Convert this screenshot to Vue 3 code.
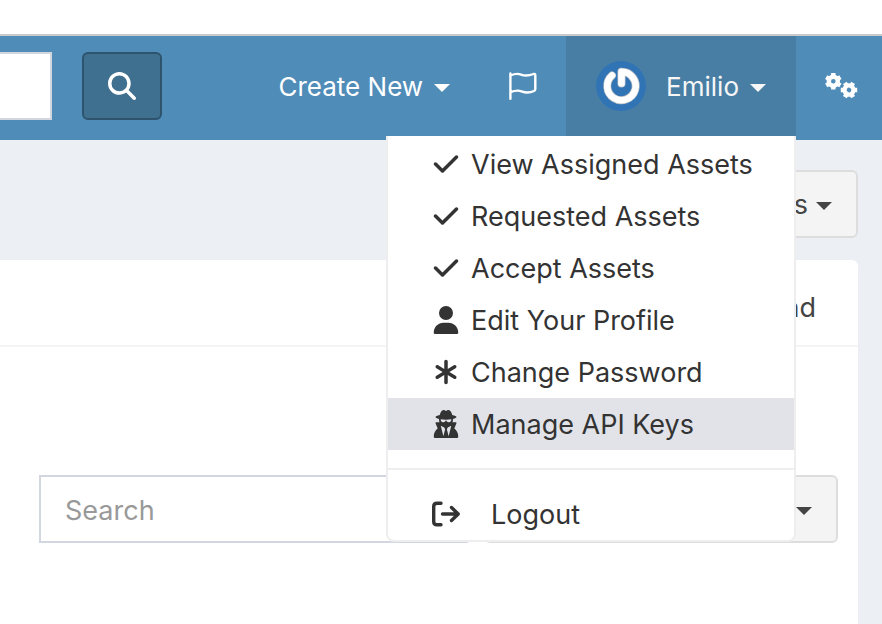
<script setup>
const checkPath =
  'M438.6 105.4c12.5 12.5 12.5 32.8 0 45.3l-256 256c-12.5 12.5-32.8 12.5-45.3 0l-128-128c-12.5-12.5-12.5-32.8 0-45.3s32.8-12.5 45.3 0L160 338.7 393.4 105.4c12.5-12.5 32.8-12.5 45.3 0z'
const userPath =
  'M224 256a128 128 0 1 0 0-256 128 128 0 1 0 0 256zm-45.7 48C79.8 304 0 383.8 0 482.3C0 498.7 13.3 512 29.7 512H418.3c16.4 0 29.7-13.3 29.7-29.7C448 383.8 368.2 304 269.7 304H178.3z'
const asteriskPath =
  'M224 32c17.700 0 32 14.300 32 32v135.500l111.500-66.900c15.200-9.100 34.800-4.200 43.900 11s4.200 34.800-11 43.900L286.200 256l114.300 68.600c15.200 9.100 20.100 28.700 11 43.900s-28.700 20.100-43.900 11L256 312.500V448c0 17.700-14.300 32-32 32s-32-14.300-32-32V312.500L80.500 379.400c-15.200 9.100-34.800 4.200-43.900-11s-4.200-34.800 11-43.900L161.800 256 47.500 187.400c-15.200-9.100-20.100-28.700-11-43.900s28.700-20.100 43.900-11L192 199.500V64c0-17.700 14.300-32 32-32z'
const secretPath =
  'M224 16c-6.7 0-10.8-2.8-15.5-6.1C201.900 5.400 194 0 176 0c-30.500 0-52 43.700-66 89.400C62.700 98.100 32 112.200 32 128c0 14.300 25 27.100 64.600 35.900c-.4 4-.6 8-.6 12.100c0 17 3.300 33.200 9.300 48H45.400C38 224 32 230 32 237.400c0 1.700 .3 3.400 1 5l38.800 96.900C28.200 371.800 0 423.800 0 482.300C0 498.700 13.300 512 29.700 512H418.300c16.400 0 29.700-13.300 29.700-29.700c0-58.500-28.200-110.400-71.700-143L415 242.400c.6-1.600 1-3.300 1-5c0-7.400-6-13.400-13.400-13.400H342.700c6-14.800 9.300-31 9.300-48c0-4.100-.2-8.100-.6-12.100C391 155.100 416 142.300 416 128c0-15.800-30.700-29.900-78-38.600C324 43.700 302.500 0 272 0c-18 0-25.900 5.400-32.500 9.900c-4.800 3.300-8.800 6.100-15.500 6.100zm56 208H267.600c-16.500 0-31.100-10.600-36.300-26.200c-2.300-7-12.200-7-14.500 0c-5.200 15.600-19.900 26.200-36.300 26.200H168c-22.100 0-40-17.900-40-40V169.600c28.200 4.100 61 6.400 96 6.400s67.800-2.300 96-6.400V184c0 22.100-17.900 40-40 40zm-88 96l16 32L176 480 128 288l64 32zm128-32L272 480 240 352l16-32 64-32z'

const items = [
  { label: 'View Assigned Assets', icon: checkPath },
  { label: 'Requested Assets', icon: checkPath },
  { label: 'Accept Assets', icon: checkPath },
  { label: 'Edit Your Profile', icon: userPath },
  { label: 'Change Password', icon: asteriskPath },
  { label: 'Manage API Keys', icon: secretPath, active: true },
]
const teeth = [0, 60, 120]
</script>

<template>
  <div class="page">
    <header class="navbar">
      <form class="lookup" @submit.prevent>
        <input class="lookup-input" type="text" aria-label="Lookup by asset tag" />
        <button class="lookup-button" type="submit" aria-label="Find asset">
          <svg class="icon" viewBox="0 0 512 512" aria-hidden="true">
            <path
              d="M416 208c0 45.900-14.900 88.300-40 122.700L502.600 457.400c12.500 12.500 12.500 32.800 0 45.300s-32.800 12.500-45.300 0L330.700 376c-34.400 25.200-76.800 40-122.700 40C93.100 416 0 322.900 0 208S93.100 0 208 0S416 93.100 416 208zM208 352a144 144 0 1 0 0-288 144 144 0 1 0 0 288z"
            />
          </svg>
        </button>
      </form>
      <nav class="nav">
        <a class="nav-link" href="#"><span class="label">Create New</span><span class="caret"></span></a>
        <a class="nav-link" href="#" aria-label="Alerts">
          <svg class="flag" viewBox="1 0 26 28" aria-hidden="true">
            <path d="M1.400 1.500v25.300M1.400 3.500C5 2 8.500 1.200 12 2.600C16 4.200 20 3.800 24.500 2Q26.300 1.500 26.300 3.300V17Q26.300 18.500 25 19C20.500 21 16.500 20.800 12.500 19.300C8.500 17.900 5 18.800 1.400 20.200" />
          </svg>
        </a>
        <div class="user">
          <a class="nav-link user-link" href="#" aria-expanded="true">
            <svg class="avatar" viewBox="0 0 50 50" aria-hidden="true">
              <circle cx="25" cy="25" r="25" fill="#3174b5" />
              <g fill="none" stroke-linecap="round" stroke-linejoin="round">
                <path class="logo-shade" d="M16 14.400A14.200 14.200 0 1 0 25.500 10.800V22.500" />
                <path class="logo-line" d="M16 14.400A14.200 14.200 0 1 0 25.500 10.800V22.500" />
              </g>
            </svg>
            <span class="label">Emilio</span><span class="caret"></span>
          </a>
          <div class="menu">
            <a
              v-for="item in items"
              :key="item.label"
              href="#"
              class="menu-item"
              :class="{ active: item.active }"
            >
              <span class="menu-icon">
                <svg viewBox="0 0 448 512" aria-hidden="true"><path :d="item.icon" /></svg>
              </span>
              <span class="label">{{ item.label }}</span>
            </a>
            <hr class="divider" />
            <a href="#" class="menu-item logout">
              <span class="menu-icon">
                <svg class="exit" viewBox="0 0 28 28" aria-hidden="true">
                  <path d="M9 3.200H5Q1.700 3.200 1.700 6.500V21.500Q1.700 24.800 5 24.800H9M10.500 14H26M19.500 7.500L26.200 14L19.500 20.500" />
                </svg>
              </span>
              <span class="label">Logout</span>
            </a>
          </div>
        </div>
        <a class="nav-link gears-link" href="#" aria-label="Settings">
          <svg class="gears" viewBox="0 0 34 28" aria-hidden="true">
            <g transform="translate(9.300 9.300)">
              <circle r="4.500" />
              <path v-for="a in teeth" :key="a" :transform="`rotate(${a})`" d="M0-8.200V-5M0 5V8.200" />
            </g>
            <g transform="translate(25 18) rotate(30)">
              <circle r="4.500" />
              <path v-for="a in teeth" :key="a" :transform="`rotate(${a})`" d="M0-8.200V-5M0 5V8.200" />
            </g>
          </svg>
        </a>
      </nav>
    </header>

    <main class="content">
      <div class="toolbar">
        <button class="btn" type="button"><span class="label">Actions</span><span class="caret"></span></button>
      </div>
      <section class="card">
        <div class="card-head"><a href="#">Send</a></div>
        <div class="card-body">
          <input class="search" type="search" placeholder="Search" aria-label="Search" />
          <button class="btn columns" type="button" aria-label="Columns"><span class="caret"></span></button>
        </div>
      </section>
    </main>
  </div>
</template>

<style>
body {
  background: #ecf0f5;
}
</style>

<style scoped>
.page,
.page * {
  box-sizing: border-box;
}
.page {
  display: flex;
  flex-direction: column;
  min-height: 100vh;
  padding-top: 34px;
  overflow: hidden;
  background: linear-gradient(#fff 34px, #ecf0f5 34px);
  font-family: Inter, Roboto, "Liberation Sans", sans-serif;
  font-size: 27px;
  line-height: 40px;
  color: #333;
}
a {
  color: inherit;
  text-decoration: none;
}
input,
button {
  font: inherit;
  color: inherit;
}
.label {
  padding-top: 2px;
}
.navbar {
  display: flex;
  justify-content: space-between;
  height: 106px;
  border-top: 2px solid #c8cacb;
  background: #508cb8;
  color: #fff;
}
.lookup {
  display: flex;
  align-items: flex-start;
  gap: 30px;
  padding-top: 16px;
}
.lookup-input {
  width: 52px;
  height: 68px;
  border: 2px solid #d2d6de;
  border-left: 0;
  background: #fff;
}
.lookup-button {
  display: flex;
  align-items: center;
  justify-content: center;
  width: 80px;
  height: 68px;
  padding: 0;
  border: 2px solid #2e536d;
  border-radius: 6px;
  background: #40708f;
}
.icon {
  width: 28px;
  height: 28px;
  fill: #fff;
}
.nav {
  display: flex;
}
.nav-link {
  display: flex;
  align-items: center;
  height: 100px;
  padding: 0 30px;
  font-size: 26px;
  white-space: nowrap;
}
.caret {
  width: 0;
  margin-top: 4px;
  margin-left: 11px;
  border: 8px solid transparent;
  border-top-color: currentColor;
  border-bottom: 0;
}
.flag {
  width: 26px;
  height: 28px;
  overflow: visible;
  fill: none;
  stroke: #fff;
  stroke-width: 2.4;
  stroke-linecap: round;
  stroke-linejoin: round;
}
.user {
  position: relative;
}
.user-link {
  background: #497ea4;
  color: #f6f6f6;
}
.avatar {
  width: 50px;
  height: 50px;
  margin-right: 20px;
}
.logo-shade {
  stroke: #b9bec4;
  stroke-width: 8;
}
.logo-line {
  stroke: #fff;
  stroke-width: 6.6;
}
.gears-link {
  padding: 0 24px 0 28px;
}
.gears {
  width: 34px;
  height: 28px;
  fill: none;
  stroke: #fff;
  stroke-width: 4.4;
}
.menu {
  position: absolute;
  top: 100px;
  right: 0;
  z-index: 1;
  width: 410px;
  padding-top: 2px;
  border: 2px solid #eee;
  border-top: 0;
  border-radius: 0 0 8px 8px;
  background: #fff;
  color: #333;
}
.menu-item {
  display: flex;
  align-items: center;
  gap: 8px;
  height: 52px;
  padding: 0 40px;
  white-space: nowrap;
}
.menu-item.active {
  background: #e1e3e9;
}
.menu-icon {
  display: flex;
  justify-content: center;
  width: 35px;
}
.menu-icon svg {
  width: 28px;
  height: 28px;
  fill: #333;
}
.menu-icon .exit {
  fill: none;
  stroke: #333;
  stroke-width: 3.4;
  stroke-linecap: round;
  stroke-linejoin: round;
}
.divider {
  height: 2px;
  margin: 18px 0;
  border: 0;
  background: #eee;
}
.logout {
  gap: 28px;
}
.content {
  display: flex;
  flex: 1;
  flex-direction: column;
  padding: 30px 24px 0 0;
}
.toolbar {
  display: flex;
  justify-content: flex-end;
  margin-bottom: 22px;
}
.btn {
  display: flex;
  align-items: center;
  justify-content: flex-end;
  height: 68px;
  padding: 0 24px;
  border: 2px solid #ddd;
  border-radius: 6px;
  background: #f4f4f4;
  color: #444;
}
.btn .caret {
  margin-left: 8px;
}
.card {
  flex: 1;
  border-radius: 0 6px 0 0;
  background: #fff;
  box-shadow: 0 1px 1px #0000001a;
}
.card-head {
  display: flex;
  align-items: center;
  justify-content: flex-end;
  height: 87px;
  padding: 10px 42px 0 0;
  border-bottom: 2px solid #f4f4f4;
  color: #444;
}
.card-body {
  display: flex;
  gap: 16px;
  padding: 128px 20px 0 39px;
}
.search {
  flex: 5;
  min-width: 0;
  height: 68px;
  padding: 2px 24px 0;
  border: 2px solid #d2d6de;
  border-radius: 0;
  background: #fff;
  appearance: none;
}
.search::placeholder {
  color: #999;
  opacity: 1;
}
.columns {
  flex: 4;
}
</style>
